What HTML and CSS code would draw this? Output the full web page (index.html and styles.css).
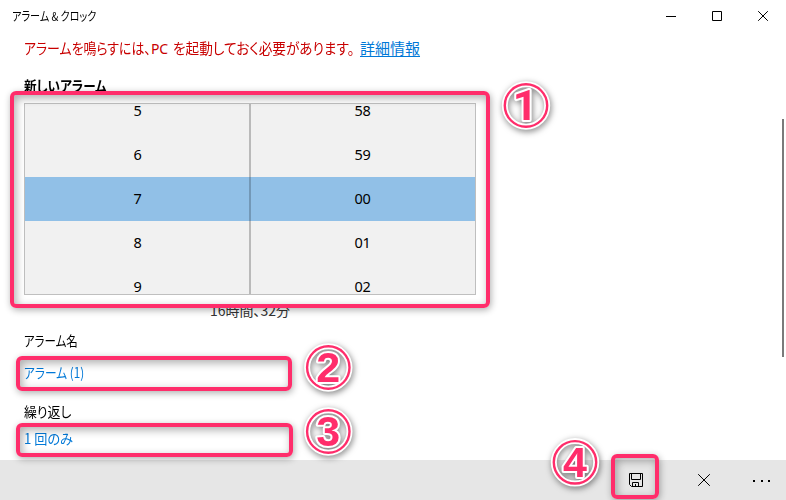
FILE: index.html
```html
<!DOCTYPE html>
<html lang="ja">
<head>
<meta charset="utf-8">
<title>アラーム &amp; クロック</title>
<link rel="stylesheet" href="styles.css">
</head>
<body>
<div class="window">
  <header class="titlebar">
    <h1 class="app-title"><span class="fit fit-title">アラーム &amp; クロック</span></h1>
    <div class="controls">
      <svg width="46" height="32" viewBox="0 0 46 32"><path d="M18 16.5h10"/></svg>
      <svg width="46" height="32" viewBox="0 0 46 32"><path d="M18.500 11.500h9v9h-9z"/></svg>
      <svg width="46" height="32" viewBox="0 0 46 32"><path d="M18.200 11.200l9.600 9.600M27.800 11.200l-9.600 9.600"/></svg>
    </div>
  </header>
  <main class="content">
    <p class="notice"><span class="notice-start"><span class="fit fit-start">アラームを鳴らすには、</span></span><span class="notice-pc">PC</span><span class="notice-end"><span class="fit fit-end">を起動しておく必要があります。</span></span><a class="more">詳細情報</a></p>
    <h2 class="heading"><span class="fit fit-heading">新しいアラーム</span></h2>
    <div class="picker">
      <ul class="column"><li>5</li><li>6</li><li class="selected">7</li><li>8</li><li>9</li></ul>
      <ul class="column"><li>58</li><li>59</li><li class="selected">00</li><li>01</li><li>02</li></ul>
    </div>
    <p class="remaining"><span class="fit">16時間、32分</span></p>
    <div class="label name-label"><span class="fit fit-name">アラーム名</span></div>
    <div class="value name-value"><span class="fit fit-alarm">アラーム (1)</span></div>
    <div class="label repeat-label"><span class="fit fit-repeat">繰り返し</span></div>
    <div class="value repeat-value"><span class="fit fit-once">1 回のみ</span></div>
  </main>
  <footer class="commands">
    <svg width="68" height="40" viewBox="0 0 68 40"><path d="M27.500 13.500h13v13h-11l-2-2zM29.500 13.500v6h9v-6M30.500 26.500v-4h6v4M33.500 24v2.500"/></svg>
    <svg width="68" height="40" viewBox="0 0 68 40"><path d="M28.200 14.200l11.600 11.600M39.800 14.200l-11.600 11.600"/></svg>
    <svg width="48" height="40" viewBox="0 0 48 40"><path class="dots" d="M15 20h2v2h-2zM23 20h2v2h-2zM30 20h2v2h-2z"/></svg>
  </footer>
  <div class="scrollbar"></div>
  <div class="frame frame-time"></div>
  <div class="frame frame-name"></div>
  <div class="frame frame-repeat"></div>
  <div class="frame frame-save"></div>
  <svg class="badges" width="786" height="500" viewBox="0 0 786 500">
    <g transform="translate(526 105.500)"><circle class="halo" r="21.200"/><circle class="ring" r="21.200"/><text class="one" x="-1" y="14.500">1</text></g>
    <g transform="translate(328.300 367.500)"><circle class="halo" r="21.200"/><circle class="ring" r="21.200"/><text y="14.500">2</text></g>
    <g transform="translate(328.300 431.500)"><circle class="halo" r="21.200"/><circle class="ring" r="21.200"/><text y="14">3</text></g>
    <g transform="translate(575 462.300)"><circle class="halo" r="21.200"/><circle class="ring" r="21.200"/><text y="14.500">4</text></g>
  </svg>
</div>
</body>
</html>
```
FILE: styles.css
```css
* { box-sizing: border-box; margin: 0; padding: 0; }
body {
  width: 786px;
  height: 500px;
  overflow: hidden;
  background: #fff;
  color: #000;
  font: 14px "Noto Sans", "Noto Sans CJK JP", sans-serif;
}
.window { position: relative; display: flex; flex-direction: column; height: 500px; }
.titlebar { display: flex; justify-content: space-between; height: 32px; padding-left: 12px; }
.app-title { font-size: 12px; font-weight: 400; line-height: 32px; }
.controls { display: flex; }
svg { display: block; fill: none; stroke: #000; stroke-width: 1; }
.fit {
  display: inline-block;
  white-space: nowrap;
  font-family: "Noto Sans CJK JP", sans-serif;
  font-feature-settings: "palt";
  transform-origin: left center;
}
.fit-title { transform: scaleX(.84); }
.fit-start { transform: scaleX(.86); }
.fit-end { transform: scaleX(.91); }
.fit-heading { transform: scaleX(.9); }
.fit-name { transform: scaleX(.82); }
.fit-alarm { transform: scaleX(.835); }
.fit-repeat { transform: scaleX(.92); }
.fit-once { transform: scaleX(.94); }
.content { flex: 1; padding-left: 24px; }
.notice { display: flex; height: 34px; line-height: 32px; color: #c80000; font-size: 15px; }
.notice-start { width: 127px; }
.notice-pc { width: 22px; font-size: 14px; letter-spacing: -.3px; line-height: 34px; }
.notice-end { width: 187px; }
.more { height: 25px; color: #0078d7; font-family: "Noto Sans CJK JP", sans-serif; text-decoration: underline; text-underline-offset: 2px; }
.heading { height: 37px; font-size: 14px; line-height: 38px; }
.picker {
  display: grid;
  grid-template-columns: 225px 225px;
  width: 452px;
  height: 192px;
  overflow: hidden;
  border: 1px solid #bfbfbf;
  background: #f1f1f1;
}
.column { margin-top: -15px; list-style: none; text-align: center; }
.column + .column { box-shadow: -1px 0 #bababa, inset 1px 0 #bababa; }
.column li { height: 44px; font-size: 14.500px; letter-spacing: -.3px; line-height: 43px; }
.column .selected { background: #91c0e7; }
.column + .column .selected { box-shadow: -1px 0 #7398b7, inset 1px 0 #7398b7; }
.remaining { width: 452px; height: 33px; line-height: 31px; text-align: center; color: #333; }
.label, .value { line-height: 25px; }
.value { color: #0078d7; }
.name-label { height: 32px; }
.name-value { height: 39px; }
.repeat-label { height: 27px; }
.repeat-value { height: 30px; }
.commands { display: flex; height: 40px; padding-left: 602px; background: #e6e6e6; }
.dots { fill: #000; stroke: none; }
.scrollbar { position: absolute; left: 782px; top: 119px; width: 2px; height: 238px; background: #7a7a7a; }
.frame {
  position: absolute;
  border: 4px solid #ff2d6b;
  border-radius: 6px;
  box-shadow: 1px 2px 7px rgba(0, 0, 0, .32), inset 2px 3px 8px rgba(0, 0, 0, .32);
}
.frame-time { left: 10px; top: 91px; width: 480px; height: 217px; }
.frame-name { left: 16px; top: 356px; width: 276px; height: 35px; }
.frame-repeat { left: 16px; top: 423px; width: 277px; height: 34px; }
.frame-save { left: 611px; top: 454px; width: 48px; height: 45px; }
.badges { position: absolute; left: 0; top: 0; }
.badges g { filter: drop-shadow(1px 2px 3px rgba(0, 0, 0, .5)); }
.badges circle { fill: none; }
.halo { stroke: #fff; stroke-width: 6; }
.ring { stroke: #ff2d6b; stroke-width: 2.400; }
.badges text {
  fill: #ff2d6b;
  stroke: #fff;
  stroke-width: 4;
  stroke-linejoin: round;
  paint-order: stroke;
  text-anchor: middle;
  font: bold 43px "Liberation Sans", sans-serif;
}
.badges .one { font-family: Roboto, sans-serif; }
```
